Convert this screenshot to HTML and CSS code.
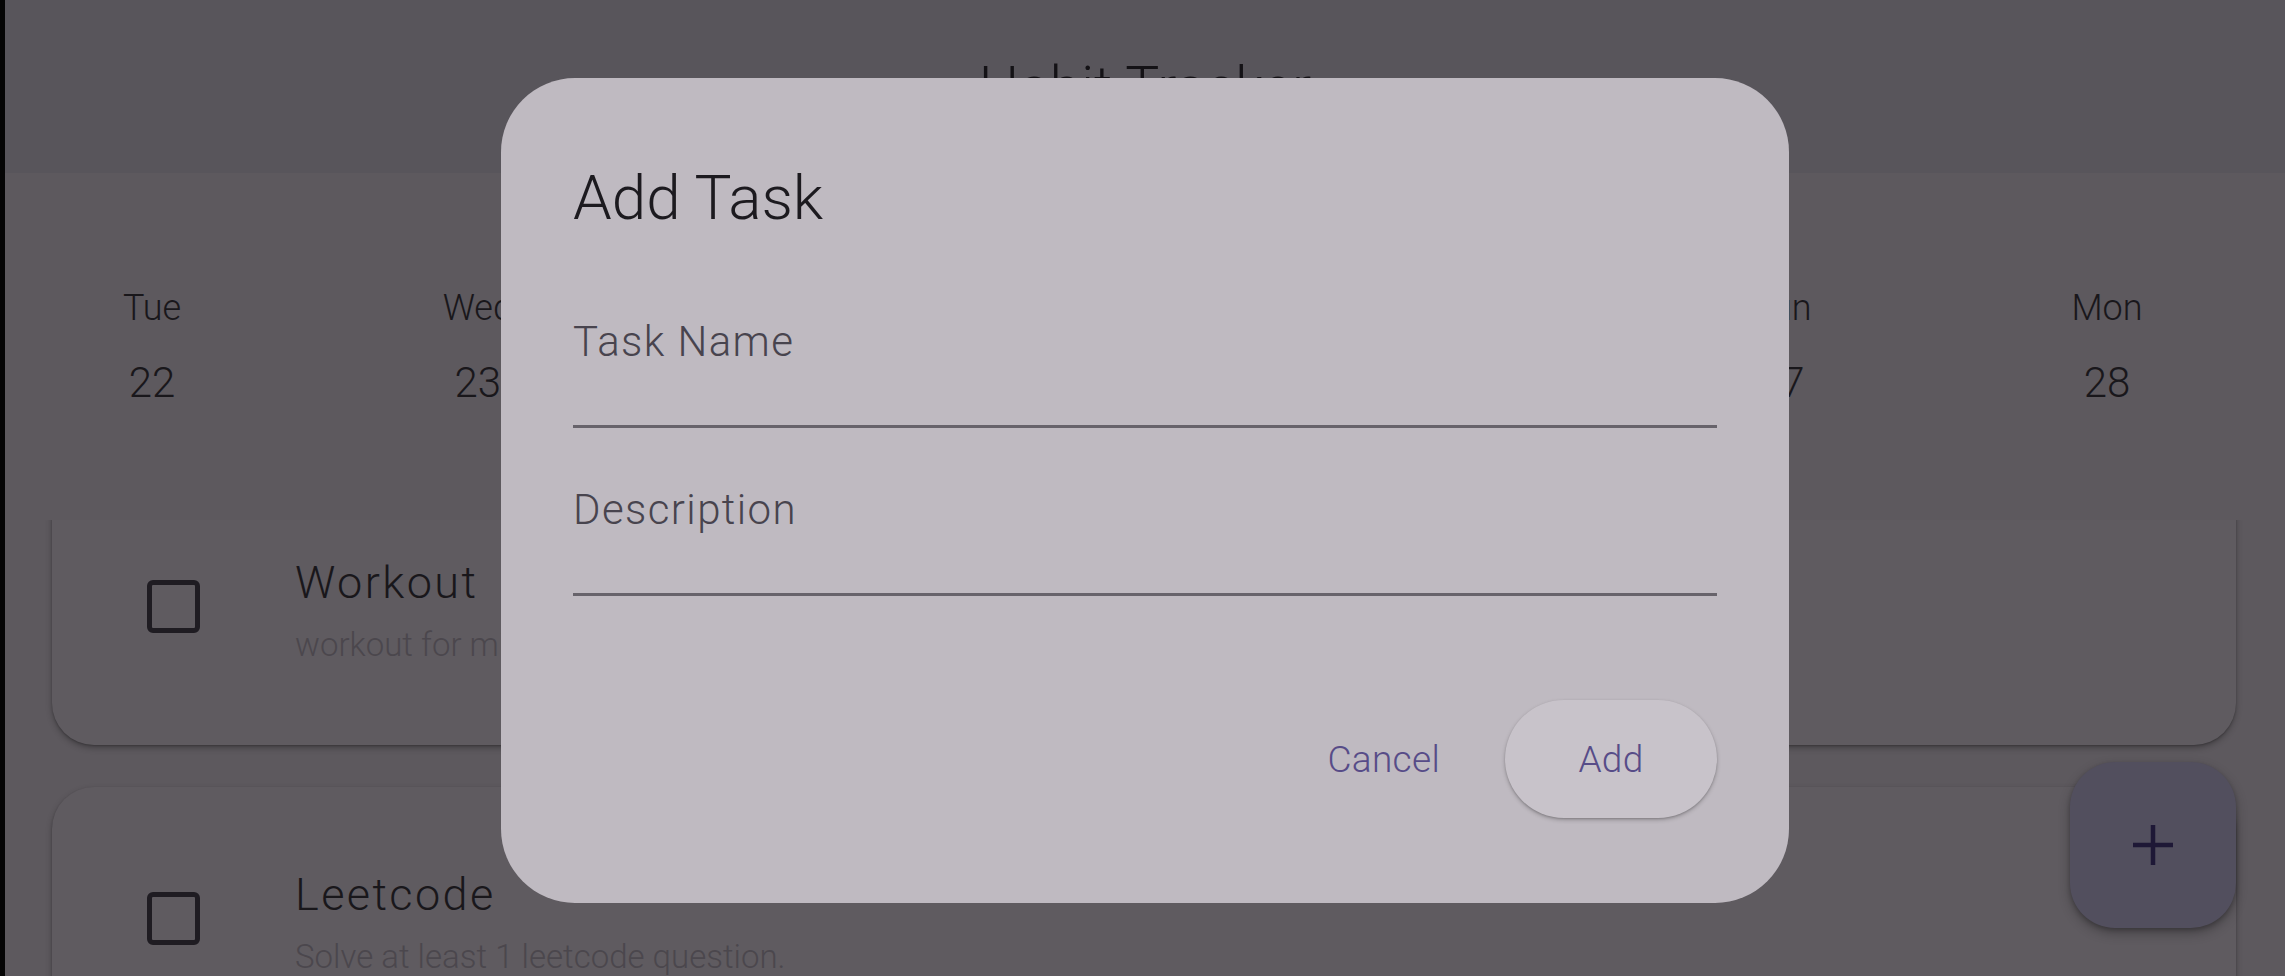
FILE: index.html
```html
<!DOCTYPE html>
<html lang="en">
<head>
<meta charset="utf-8">
<title>Habit Tracker</title>
<link rel="stylesheet" href="styles.css">
</head>
<body>
<div class="screen">
  <div class="edge"></div>
  <div class="app">
    <header class="appbar">
      <h1 class="appbar-title">Habit Tracker</h1>
    </header>
    <section class="days">
      <div class="day"><span class="day-name">Tue</span><span class="day-num">22</span></div>
      <div class="day"><span class="day-name">Wed</span><span class="day-num">23</span></div>
      <div class="day"><span class="day-name">Thu</span><span class="day-num">24</span></div>
      <div class="day"><span class="day-name">Fri</span><span class="day-num">25</span></div>
      <div class="day"><span class="day-name">Sat</span><span class="day-num">26</span></div>
      <div class="day"><span class="day-name">Sun</span><span class="day-num">27</span></div>
      <div class="day"><span class="day-name">Mon</span><span class="day-num">28</span></div>
    </section>
    <section class="list">
      <div class="list-inner">
        <article class="card">
          <span class="checkbox"></span>
          <div class="card-text">
            <div class="card-title">Workout</div>
            <div class="card-sub">workout for minimum 30 minutes</div>
          </div>
        </article>
        <article class="card">
          <span class="checkbox"></span>
          <div class="card-text">
            <div class="card-title">Leetcode</div>
            <div class="card-sub">Solve at least 1 leetcode question.</div>
          </div>
        </article>
      </div>
    </section>
    <button class="fab" aria-label="Add">
      <svg width="42" height="42" viewBox="0 0 42 42"><path d="M21 1v40M1 21h40" stroke="#1e1836" stroke-width="4.5" fill="none"/></svg>
    </button>
  </div>

  <div class="dialog">
    <h2 class="dialog-title">Add Task</h2>
    <div class="field field-first"><span class="field-label">Task Name</span></div>
    <div class="field"><span class="field-label">Description</span></div>
    <div class="actions">
      <button class="btn-text">Cancel</button>
      <button class="btn-add">Add</button>
    </div>
  </div>
</div>
</body>
</html>
```

FILE: styles.css
```css
* { box-sizing: border-box; }

html, body {
  margin: 0;
  padding: 0;
  width: 2285px;
  height: 976px;
  overflow: hidden;
  background: #5d595e;
  font-family: Roboto, "Liberation Sans", Arial, sans-serif;
  font-weight: 300;
}

.screen {
  position: relative;
  display: flex;
  width: 2285px;
  height: 976px;
}

.edge {
  width: 5px;
  flex: none;
  background: #050505;
}

.app {
  position: relative;
  flex: 1;
  display: flex;
  flex-direction: column;
  height: 976px;
  background: #5d595e;
}

.appbar {
  height: 173px;
  flex: none;
  display: flex;
  align-items: center;
  justify-content: center;
  background: #58555b;
  padding-top: 3px;
}

.appbar-title {
  margin: 0;
  font-size: 57px;
  font-weight: 300;
  line-height: 76px;
  color: #141216;
}

.days {
  height: 347px;
  flex: none;
  display: flex;
  justify-content: space-between;
  align-items: flex-start;
  padding: 111px 118px 0 87px;
}

.day {
  width: 120px;
  display: flex;
  flex-direction: column;
  align-items: center;
  gap: 23px;
  color: #19171b;
}

.day-name {
  font-size: 36px;
  line-height: 48px;
}

.day-num {
  font-size: 42px;
  line-height: 56px;
}

.list {
  flex: 1;
  overflow: hidden;
}

.list-inner {
  margin-top: -45px;
  padding: 0 49px 0 47px;
  display: flex;
  flex-direction: column;
  gap: 42px;
}

.card {
  height: 270px;
  display: flex;
  align-items: center;
  gap: 95px;
  padding-left: 95px;
  border-radius: 42px;
  background: #5f5b60;
  box-shadow: 0 3px 6px rgba(0, 0, 0, 0.28), 0 1px 2px rgba(0, 0, 0, 0.2);
}

.checkbox {
  width: 53px;
  height: 53px;
  flex: none;
  margin-bottom: 7px;
  border: 5px solid #1f1c22;
  border-radius: 6px;
}

.card-text {
  display: flex;
  flex-direction: column;
  gap: 12px;
}

.card-title {
  font-size: 45px;
  line-height: 57px;
  letter-spacing: 2.4px;
  color: #19171b;
}

.card-sub {
  font-size: 33px;
  line-height: 44px;
  color: #4b474d;
}

.fab {
  position: absolute;
  right: 49px;
  bottom: 48px;
  width: 166px;
  height: 166px;
  border: none;
  border-radius: 45px;
  background: #524f5e;
  display: flex;
  align-items: center;
  justify-content: center;
  padding: 0;
  box-shadow: 0 5px 12px rgba(0, 0, 0, 0.28), 0 2px 4px rgba(0, 0, 0, 0.2);
}

.dialog {
  position: absolute;
  left: 501px;
  top: 78px;
  width: 1288px;
  height: 825px;
  border-radius: 74px;
  background: #bfbac1;
  padding: 80px 72px 0 72px;
  display: flex;
  flex-direction: column;
}

.dialog-title {
  margin: 0;
  font-size: 62px;
  font-weight: 300;
  line-height: 80px;
  color: #1c1a1f;
}

.field {
  margin-top: 54px;
  padding-bottom: 55px;
  border-bottom: 3px solid #67636b;
}

.field-first {
  margin-top: 76px;
}

.field-label {
  display: block;
  font-size: 42px;
  line-height: 56px;
  letter-spacing: 1.4px;
  color: #48444e;
}

.actions {
  margin-top: 104px;
  display: flex;
  justify-content: flex-end;
  align-items: center;
  gap: 33px;
}

.btn-text,
.btn-add {
  font-family: Roboto, "Liberation Sans", Arial, sans-serif;
  font-weight: 300;
  font-size: 37px;
  letter-spacing: 0.3px;
  color: #574c88;
  border: none;
  cursor: pointer;
}

.btn-text {
  background: transparent;
  padding: 0 32px;
  height: 118px;
}

.btn-add {
  width: 212px;
  height: 118px;
  border-radius: 59px;
  background: #c8c3ca;
  box-shadow: 0 2px 4px rgba(0, 0, 0, 0.22), 0 1px 2px rgba(0, 0, 0, 0.15);
}
```
